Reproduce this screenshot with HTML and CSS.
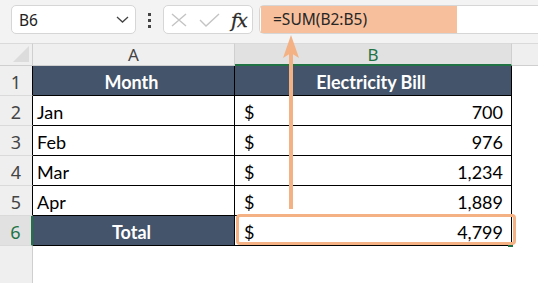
FILE: index.html
```html
<!DOCTYPE html>
<html lang="en">
<head>
    <meta charset="UTF-8">
    <title>SUM formula</title>
    <link rel="stylesheet" href="styles.css">
</head>
<body>

    <!-- formula toolbar -->
    <div class="toolbar">
        <div class="name-box">
            <span>B6</span>
            <svg class="chevron" width="13" height="7" viewBox="0 0 13 7">
                <path d="M1 1 L6.5 6 L12 1" fill="none" stroke="#444" stroke-width="1.3"/>
            </svg>
        </div>
        <div class="dots"><i></i><i></i><i></i></div>
        <div class="fx-box">
            <svg width="16" height="14" viewBox="0 0 16 14">
                <path d="M1 1 L15 13 M15 1 L1 13" stroke="#c4c4c4" stroke-width="1.4" fill="none"/>
            </svg>
            <svg width="21" height="14" viewBox="0 0 21 14">
                <path d="M1 7 L7 13 L20 1" stroke="#c4c4c4" stroke-width="1.4" fill="none"/>
            </svg>
            <span class="fx">fx</span>
        </div>
        <div class="formula-bar">
            <div class="formula">=SUM(B2:B5)</div>
        </div>
    </div>

    <!-- worksheet -->
    <div class="sheet">
        <div class="corner"><span class="tri"></span></div>
        <div class="col-head">A</div>
        <div class="col-head active">B</div>
        <div class="col-head rest"></div>

        <div class="row-num">1</div>
        <div class="cell head">Month</div>
        <div class="cell head">Electricity Bill</div>
        <div class="blank"></div>

        <div class="row-num">2</div>
        <div class="cell">Jan</div>
        <div class="cell money"><span>$</span><span>700</span></div>
        <div class="blank"></div>

        <div class="row-num">3</div>
        <div class="cell">Feb</div>
        <div class="cell money"><span>$</span><span>976</span></div>
        <div class="blank"></div>

        <div class="row-num">4</div>
        <div class="cell">Mar</div>
        <div class="cell money"><span>$</span><span>1,234</span></div>
        <div class="blank"></div>

        <div class="row-num">5</div>
        <div class="cell">Apr</div>
        <div class="cell money"><span>$</span><span>1,889</span></div>
        <div class="blank"></div>

        <div class="row-num active">6</div>
        <div class="cell head">Total</div>
        <div class="cell money selected"><span>$</span><span>4,799</span></div>
        <div class="blank"></div>

        <div class="row-num filler"></div>
        <div class="blank"></div>
        <div class="blank"></div>
        <div class="blank"></div>
    </div>

    <!-- arrow from the total cell up to the formula -->
    <svg class="arrow" width="18" height="176" viewBox="0 0 18 176">
        <path d="M9 14 L9 174" stroke="#f4b183" stroke-width="4"/>
        <path d="M9 0 L1 23 L9 18 L17 23 Z" fill="#f4b183"/>
    </svg>

</body>
</html>
```

FILE: styles.css
```css
* {
    margin: 0;
    padding: 0;
    box-sizing: border-box;
}
body {
    width: 538px;
    height: 283px;
    overflow: hidden;
    background-color: #fff;
    font-family: "Noto Sans", "Open Sans", sans-serif;
    position: relative;
}
.toolbar {
    height: 43px;
    background-color: #f3f3f3;
    display: flex;
    align-items: flex-start;
    padding: 5px 0 0 11px;
}
.name-box {
    width: 125px;
    height: 29px;
    background-color: #fff;
    border: 1px solid #d6d6d6;
    border-radius: 5px;
    display: flex;
    align-items: center;
    justify-content: space-between;
    padding: 0 6px 0 7px;
    font-size: 15.5px;
    color: #222;
}
.dots {
    width: 4px;
    margin: 8px 11px 0 12px;
    display: flex;
    flex-direction: column;
    gap: 3px;
}
.dots i {
    display: block;
    width: 3px;
    height: 3px;
    background-color: #444;
}
.fx-box {
    width: 90px;
    height: 29px;
    background-color: #fff;
    border: 1px solid #d6d6d6;
    border-radius: 5px;
    display: flex;
    align-items: center;
    padding-left: 7px;
    gap: 12px;
}
.fx {
    font-family: "DejaVu Serif", "Liberation Serif", serif;
    font-style: italic;
    font-size: 19px;
    color: #2a2a2a;
    margin-left: -1px;
    letter-spacing: -1px;
    -webkit-text-stroke: 0.3px #2a2a2a;
}
.formula-bar {
    flex: 1;
    margin-left: 6px;
    height: 29px;
    background-color: #fff;
    border: 1px solid #d6d6d6;
    border-right: none;
    border-radius: 5px 0 0 5px;
    padding: 0 1px;
}
.formula {
    width: 196px;
    height: 27px;
    background-color: #f7bf9b;
    font-size: 15.5px;
    color: #262626;
    line-height: 27px;
    padding-left: 12px;
}

/* worksheet grid */
.sheet {
    display: grid;
    grid-template-columns: 33px 202px 277px 1fr;
    grid-template-rows: 23px repeat(6, 30px) 1fr;
    height: 240px;
}
.corner {
    background-color: #efefef;
    border-top: 1px solid #dadada;
    border-right: 1px solid #cfcfcf;
    border-bottom: 1px solid #cfcfcf;
    position: relative;
}
.corner .tri {
    position: absolute;
    right: 3px;
    bottom: 3px;
    width: 0;
    height: 0;
    border-left: 16px solid transparent;
    border-bottom: 16px solid #dcdcdc;
}
.col-head {
    background-color: #efefef;
    border-top: 1px solid #dadada;
    border-right: 1px solid #cfcfcf;
    border-bottom: 1px solid #cfcfcf;
    text-align: center;
    font-size: 17px;
    line-height: 21px;
    color: #444;
}
.col-head.active {
    background-color: #e1e1e1;
    color: #217346;
    border-bottom: 2px solid #217346;
}
.col-head.rest {
    border-right: none;
}
.row-num {
    background-color: #efefef;
    border-right: 1px solid #000;
    border-bottom: 1px solid #dadada;
    text-align: center;
    font-size: 18px;
    line-height: 32px;
    color: #444;
}
.row-num.active {
    background-color: #e1e1e1;
    color: #217346;
    border-right: 2px solid #217346;
}
.row-num.filler {
    border-right: 1px solid #cfcfcf;
    border-bottom: none;
}
.cell {
    border-right: 1px solid #000;
    border-bottom: 1px solid #000;
    font-family: Lato, "Liberation Sans", sans-serif;
    font-size: 18px;
    color: #000;
    padding: 3px 8px 0 4px;
    display: flex;
    align-items: center;
}
.cell.head {
    background-color: #44546a;
    color: #fff;
    font-weight: bold;
    justify-content: center;
}
.cell.money {
    justify-content: space-between;
    padding-left: 9px;
}
.cell.selected {
    position: relative;
}
.cell.selected::before {
    content: "";
    position: absolute;
    right: -2px;
    bottom: -2px;
    width: 5px;
    height: 5px;
    background-color: #217346;
}
.cell.selected::after {
    content: "";
    position: absolute;
    left: 1px;
    top: -2px;
    right: -5px;
    bottom: 0;
    border: 3px solid #f4b183;
    border-radius: 4px;
}
.blank {
    background-color: #fff;
}
.arrow {
    position: absolute;
    left: 282px;
    top: 35px;
}
```
